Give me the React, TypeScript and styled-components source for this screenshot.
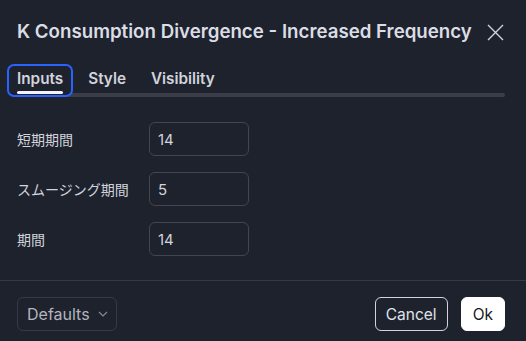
import * as React from 'react'
import styled, { createGlobalStyle } from 'styled-components'

// ***** Global
const GlobalStyle = createGlobalStyle`
  html, body {
    margin: 0;
    padding: 0;
    background: #1e222d;
  }
  body {
    font-family: Inter, "Noto Sans", "Noto Sans CJK JP", sans-serif;
    color: #d1d4dc;
    -webkit-font-smoothing: antialiased;
  }
`

// ***** Styled Components
const Dialog = styled.div`
  width: 526px;
  height: 341px;
  background: #1e222d;
  display: flex;
  flex-direction: column;
`

const Header = styled.header`
  display: flex;
  align-items: center;
  justify-content: space-between;
  padding: 20px 22px 0 17px;
  height: 24px;
`

const Title = styled.h1`
  margin: 0;
  font-size: 18.7px;
  line-height: 24px;
  font-weight: 600;
  color: #dbdde4;
  white-space: nowrap;
`

const CloseButton = styled.button`
  display: flex;
  align-items: center;
  justify-content: center;
  width: 18px;
  height: 18px;
  padding: 0;
  border: none;
  background: transparent;
  color: #d1d4dc;
`

const Tabs = styled.nav`
  position: relative;
  display: flex;
  gap: 5px;
  margin-top: 20px;
  padding-left: 7px;
  height: 33px;
`

const Track = styled.div`
  position: absolute;
  left: 17px;
  right: 21px;
  bottom: 0;
  height: 4px;
  border-radius: 2px;
  background: #3b3e48;
`

const Tab = styled.button<{ $active?: boolean }>`
  position: relative;
  z-index: 1;
  padding: 0 8px 3px;
  height: 33px;
  box-sizing: border-box;
  border: 2px solid ${(p) => (p.$active ? '#2962ff' : 'transparent')};
  border-radius: 7px;
  background: ${(p) => (p.$active ? '#1e222d' : 'transparent')};
  color: #d1d4dc;
  font-family: inherit;
  font-size: 15.3px;
  font-weight: 600;
  line-height: 20px;

  &::after {
    content: '';
    display: ${(p) => (p.$active ? 'block' : 'none')};
    position: absolute;
    left: 8px;
    right: 8px;
    bottom: 1px;
    height: 3px;
    border-radius: 2px;
    background: #f0f3fa;
  }
`

const Body = styled.section`
  display: flex;
  flex-direction: column;
  gap: 16px;
  padding: 25px 17px 0;
  height: 158px;
  border-bottom: 1px solid #363a45;
`

const Row = styled.div`
  display: grid;
  grid-template-columns: 132px 100px;
  align-items: center;
`

const Label = styled.span`
  font-size: 14px;
  color: #d1d4dc;
`

const Input = styled.input`
  box-sizing: border-box;
  width: 100px;
  height: 34px;
  padding: 0 8px;
  border: 1px solid #434651;
  border-radius: 6px;
  background: transparent;
  color: #d1d4dc;
  font-family: inherit;
  font-size: 15px;
  outline: none;
`

const Footer = styled.footer`
  display: flex;
  align-items: center;
  justify-content: space-between;
  padding: 16px 21px 0 17px;
`

const Select = styled.button`
  box-sizing: border-box;
  display: flex;
  align-items: center;
  justify-content: space-between;
  width: 100px;
  height: 34px;
  padding: 0 8px 0 9px;
  border: 1px solid #363a45;
  border-radius: 6px;
  background: transparent;
  color: #b2b5be;
  font-family: inherit;
  font-size: 16px;
`

const Actions = styled.div`
  display: flex;
  gap: 13px;
`

const ActionButton = styled.button<{ $primary?: boolean }>`
  box-sizing: border-box;
  height: 34px;
  padding: 0 ${(p) => (p.$primary ? '11px' : '10px')};
  border: 1px solid ${(p) => (p.$primary ? '#ffffff' : '#d1d4dc')};
  border-radius: 6px;
  background: ${(p) => (p.$primary ? '#ffffff' : 'transparent')};
  color: ${(p) => (p.$primary ? '#131722' : '#e0e3eb')};
  font-family: inherit;
  font-size: 15.5px;
`

// ***** Data
const fields = [
  { label: '短期期間', value: '14' },
  { label: 'スムージング期間', value: '5' },
  { label: '期間', value: '14' },
]

// ***** Component
export default function App() {
  return (
    <>
      <GlobalStyle />
      <Dialog>
        <Header>
          <Title>K Consumption Divergence - Increased Frequency</Title>
          <CloseButton aria-label="close">
            <svg width="17" height="17" viewBox="0 0 17 17" fill="none">
              <path d="M1 1l15 15M16 1L1 16" stroke="currentColor" strokeWidth="1.4" />
            </svg>
          </CloseButton>
        </Header>
        <Tabs>
          <Track />
          <Tab $active>Inputs</Tab>
          <Tab>Style</Tab>
          <Tab>Visibility</Tab>
        </Tabs>
        <Body>
          {fields.map((f) => (
            <Row key={f.label}>
              <Label>{f.label}</Label>
              <Input defaultValue={f.value} />
            </Row>
          ))}
        </Body>
        <Footer>
          <Select>
            Defaults
            <svg width="10" height="6" viewBox="0 0 10 6" fill="none">
              <path d="M1 1l4 4 4-4" stroke="#868993" strokeWidth="1.2" />
            </svg>
          </Select>
          <Actions>
            <ActionButton>Cancel</ActionButton>
            <ActionButton $primary>Ok</ActionButton>
          </Actions>
        </Footer>
      </Dialog>
    </>
  )
}
